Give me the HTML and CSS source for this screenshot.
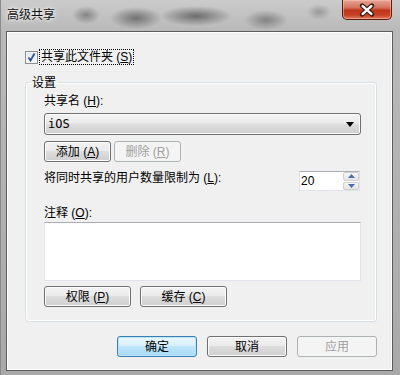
FILE: index.html
```html
<!DOCTYPE html>
<html lang="zh-CN">
<head>
  <meta charset="UTF-8">
  <title>高级共享</title>
  <link rel="stylesheet" href="styles.css">
</head>
<body>
  <div class="window">
    <div class="titlebar">
      <span class="title">高级共享</span>
      <button class="close">
        <svg width="50" height="20" viewBox="0 0 50 20">
          <path d="M20 5.5 L30 14.5 M30 5.5 L20 14.5" stroke="#3b1c16" stroke-width="5" stroke-linecap="round" fill="none"/>
          <path d="M20.5 6 L29.5 14 M29.5 6 L20.5 14" stroke="#ffffff" stroke-width="2.6" stroke-linecap="round" fill="none"/>
        </svg>
      </button>
    </div>

    <div class="client">
      <label class="check-row">
        <span class="checkbox">
          <svg width="11" height="11" viewBox="0 0 11 11">
            <path d="M2.5 5.5 L4.5 8.5 L8.5 1.5" stroke="#2f4f9c" stroke-width="1.8" fill="none"/>
          </svg>
        </span>
        <span class="focus">共享此文件夹 (<u>S</u>)</span>
      </label>

      <fieldset class="group">
        <legend>设置</legend>
        <div class="field-label">共享名 (<u>H</u>):</div>
        <div class="combo">
          <span>iOS</span>
          <svg width="8" height="5" viewBox="0 0 8 5"><polygon points="0,0 8,0 4,5" fill="#000"/></svg>
        </div>
        <div class="btn-row">
          <button class="btn small">添加 (<u>A</u>)</button>
          <button class="btn small disabled">删除 (<u>R</u>)</button>
        </div>
        <div class="limit-row">
          <span>将同时共享的用户数量限制为 (<u>L</u>):</span>
          <div class="spin">
            <span class="spin-value">20</span>
            <div class="spin-btns">
              <span class="spin-btn"><svg width="7" height="4" viewBox="0 0 7 4"><polygon points="0,4 7,4 3.5,0" fill="#4a6ea8"/></svg></span>
              <span class="spin-btn"><svg width="7" height="4" viewBox="0 0 7 4"><polygon points="0,0 7,0 3.5,4" fill="#4a6ea8"/></svg></span>
            </div>
          </div>
        </div>
        <div class="field-label comment-label">注释 (<u>O</u>):</div>
        <div class="textarea"></div>
        <div class="btn-row wide-row">
          <button class="btn wide">权限 (<u>P</u>)</button>
          <button class="btn wide">缓存 (<u>C</u>)</button>
        </div>
      </fieldset>

      <div class="footer">
        <button class="btn big default">确定</button>
        <button class="btn big">取消</button>
        <button class="btn big disabled">应用</button>
      </div>
    </div>
  </div>
</body>
</html>
```

FILE: styles.css
```css
body {
  margin: 0;
  width: 400px;
  height: 375px;
  overflow: hidden;
  font-family: 'Liberation Sans', 'Noto Sans CJK SC', sans-serif;
  font-size: 12px;
  line-height: 14px;
  color: #000;
}

.window {
  height: 375px;
  box-sizing: border-box;
  padding: 0 7px 4px 5px;
  background:
    radial-gradient(ellipse 14px 9px at 85px 15px, rgba(70, 70, 70, 0.5), transparent),
    radial-gradient(ellipse 26px 11px at 135px 18px, rgba(60, 60, 60, 0.6), transparent),
    radial-gradient(ellipse 36px 10px at 195px 16px, rgba(50, 50, 50, 0.6), transparent),
    radial-gradient(ellipse 22px 10px at 265px 20px, rgba(70, 70, 70, 0.5), transparent),
    radial-gradient(ellipse 12px 8px at 318px 12px, rgba(90, 90, 90, 0.4), transparent),
    linear-gradient(180deg, #cbcbcb 0%, #b9b9b9 30px, #a9a9a9 100%);
  border-left: 1px solid #8a8a8a;
}

.titlebar {
  height: 31px;
  display: flex;
  justify-content: space-between;
  align-items: flex-start;
}

.title {
  padding: 7px 0 0 1px;
  font-family: 'Noto Sans CJK SC', sans-serif;
  color: #111;
  text-shadow: 0 0 6px #fff, 0 0 3px #fff;
}

.close {
  width: 50px;
  height: 20px;
  margin-right: 1px;
  padding: 0;
  border: 1px solid #5e1b10;
  border-top: none;
  border-radius: 0 0 5px 5px;
  background: linear-gradient(180deg, #e8a897 0%, #d3715c 40%, #c1341c 55%, #c84328 80%, #e07c5c 100%);
  box-shadow: inset 0 0 0 1px rgba(255, 200, 180, 0.5);
  display: flex;
}

.client {
  height: 340px;
  box-sizing: border-box;
  background: #f0f0f0;
  border: 1px solid #5c5c5c;
  box-shadow: inset 0 0 0 1px #fff;
  display: flex;
  flex-direction: column;
}

.check-row {
  display: flex;
  align-items: center;
  margin: 18px 0 0 18px;
  height: 14px;
}

.checkbox {
  width: 11px;
  height: 11px;
  border: 1px solid #8e8f8f;
  background: linear-gradient(180deg, #dfe6ee, #fafafa);
  box-shadow: inset 0 0 0 1px #f4f4f4;
  margin-right: 2px;
  display: flex;
}

.focus {
  outline: 1px dotted #000;
  padding: 0 1px;
}

.group {
  margin: 11px 15px 0 18px;
  padding: 5px 15px 14px 18px;
  border: 1px solid #d5dfe5;
  border-radius: 3px;
  box-shadow: inset 0 0 0 1px #fff;
  min-width: 0;
}

.group legend {
  padding: 0 2px;
  margin-left: -14px;
  font-family: 'Noto Sans CJK SC', sans-serif;
}

.field-label {
  height: 14px;
}

.combo {
  margin-top: 5px;
  height: 22px;
  box-sizing: border-box;
  border: 1px solid #707070;
  border-radius: 3px;
  background: linear-gradient(180deg, #f2f2f2 0%, #ebebeb 45%, #dddddd 50%, #cfcfcf 100%);
  box-shadow: inset 0 0 0 1px #fcfcfc;
  display: flex;
  align-items: center;
  justify-content: space-between;
  padding: 0 6px 0 3px;
  font-family: 'DejaVu Sans Mono', monospace;
}

.btn-row {
  margin-top: 6px;
  display: flex;
  gap: 3px;
}

.btn {
  height: 21px;
  padding: 0;
  border: 1px solid #707070;
  border-radius: 3px;
  background: linear-gradient(180deg, #f2f2f2 0%, #ebebeb 45%, #dddddd 50%, #cfcfcf 100%);
  box-shadow: inset 0 0 0 1px #fcfcfc;
  font: inherit;
  color: #000;
}

.btn.small {
  width: 67px;
}

.btn.disabled {
  color: #a0a0a0;
  border-color: #adb2b5;
  background: #f4f4f4;
  box-shadow: none;
}

.limit-row {
  margin-top: 9px;
  display: flex;
  justify-content: space-between;
  align-items: flex-start;
}

.spin {
  width: 61px;
  height: 20px;
  box-sizing: border-box;
  margin-right: 1px;
  border: 1px solid #e2e3ea;
  border-top-color: #abadb3;
  background: #fff;
  display: flex;
  justify-content: space-between;
}

.spin-value {
  padding: 2px 0 0 1px;
}

.spin-btns {
  width: 16px;
  display: flex;
  flex-direction: column;
  gap: 1px;
}

.spin-btn {
  flex: 1;
  border: 1px solid #d0d0d0;
  border-radius: 2px;
  background: linear-gradient(180deg, #f6f6f6, #e4e4e4);
  display: flex;
  align-items: center;
  justify-content: center;
}

.comment-label {
  margin-top: 15px;
}

.textarea {
  margin-top: 2px;
  height: 59px;
  box-sizing: border-box;
  background: #fff;
  border: 1px solid #e2e3ea;
  border-top-color: #abadb3;
}

.wide-row {
  margin-top: 5px;
  gap: 9px;
}

.btn.wide {
  width: 87px;
}

.footer {
  margin: 14px 15px 0 0;
  display: flex;
  justify-content: flex-end;
  gap: 10px;
}

.btn.big {
  width: 80px;
}

.btn.default {
  border-color: #3c7fb1;
  background: linear-gradient(180deg, #eaf6fd 0%, #d9f0fc 45%, #bee6fd 50%, #a7d9f5 100%);
  box-shadow: inset 0 0 0 1px #bbe6f9;
}
```
